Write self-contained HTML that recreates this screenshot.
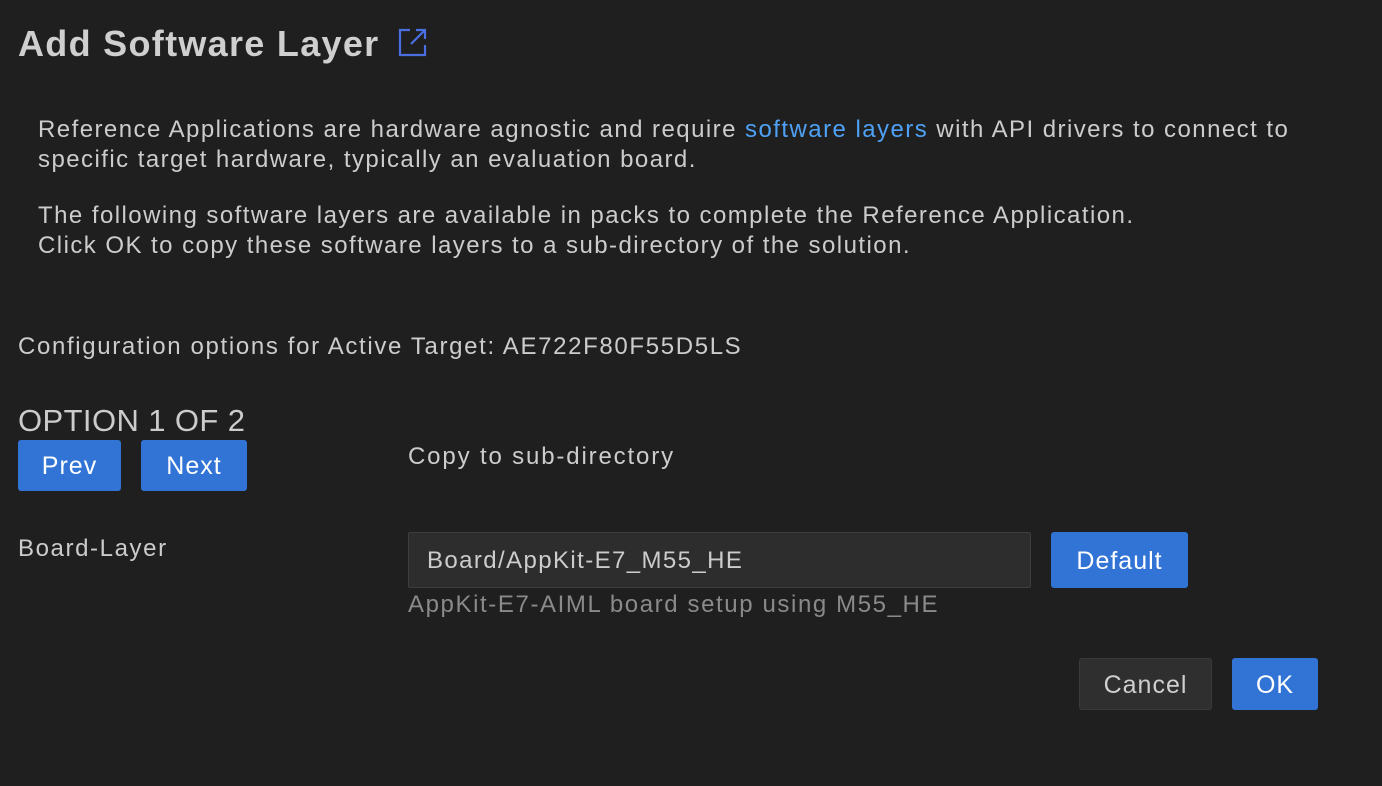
<!DOCTYPE html>
<html><head><meta charset="utf-8"><style>
body{margin:0;width:1382px;height:786px;background:#1f1f1f;color:#cccccc;font-family:"Liberation Sans",sans-serif;position:relative;overflow:hidden}
.a{position:absolute;white-space:nowrap}
.t{font-size:24px;letter-spacing:1.45px}
.btn{position:absolute;background:#3174d5;color:#fff;border-radius:3px;font-size:25px;letter-spacing:1px;display:flex;align-items:center;justify-content:center;padding-top:2px;box-sizing:border-box}
</style></head><body>
<div class="a" style="left:18px;top:23px;font-size:36px;font-weight:bold;color:#cfcfcf;letter-spacing:1.3px">Add Software Layer</div>
<svg class="a" style="left:398px;top:28px" width="30" height="30" viewBox="0 0 30 30" fill="none" stroke="#4a6fe0" stroke-width="2.2"><path d="M12 2H2V27H27V17"/><path d="M13 16L27 2M18 2H27V11"/></svg>
<div class="a t" style="left:38px;top:115px;line-height:30px">Reference Applications are hardware agnostic and require <span style="color:#4ea1f5">software layers</span> with API drivers to connect to<br>specific target hardware, typically an evaluation board.</div>
<div class="a t" style="left:38px;top:201px;line-height:30px">The following software layers are available in packs to complete the Reference Application.<br>Click OK to copy these software layers to a sub-directory of the solution.</div>
<div class="a t" style="left:18px;top:333px;letter-spacing:1.65px">Configuration options for Active Target: AE722F80F55D5LS</div>
<div class="a" style="left:18px;top:403px;font-size:31px;letter-spacing:0.4px">OPTION 1 OF 2</div>
<div class="btn" style="left:18px;top:440px;width:103px;height:51px">Prev</div>
<div class="btn" style="left:141px;top:440px;width:106px;height:51px">Next</div>
<div class="a" style="left:408px;top:443px;font-size:24px;letter-spacing:1.85px">Copy to sub-directory</div>
<div class="a" style="left:18px;top:535px;font-size:24px;letter-spacing:1.6px">Board-Layer</div>
<div class="a" style="left:408px;top:532px;background:#2d2d2d;border:1px solid #3e3e3e;border-radius:2px;font-size:24px;letter-spacing:1.4px;line-height:56px;padding-left:18px;box-sizing:border-box;width:623px;height:56px">Board/AppKit-E7_M55_HE</div>
<div class="btn" style="left:1051px;top:532px;width:137px;height:56px">Default</div>
<div class="a" style="left:408px;top:591px;font-size:24px;letter-spacing:1.6px;color:#8a8a8a">AppKit-E7-AIML board setup using M55_HE</div>
<div class="btn" style="left:1079px;top:658px;width:133px;height:52px;background:#2f2f2f;border:1px solid #3a3a3a;color:#cfcfcf">Cancel</div>
<div class="btn" style="left:1232px;top:658px;width:86px;height:52px">OK</div>
</body></html>
